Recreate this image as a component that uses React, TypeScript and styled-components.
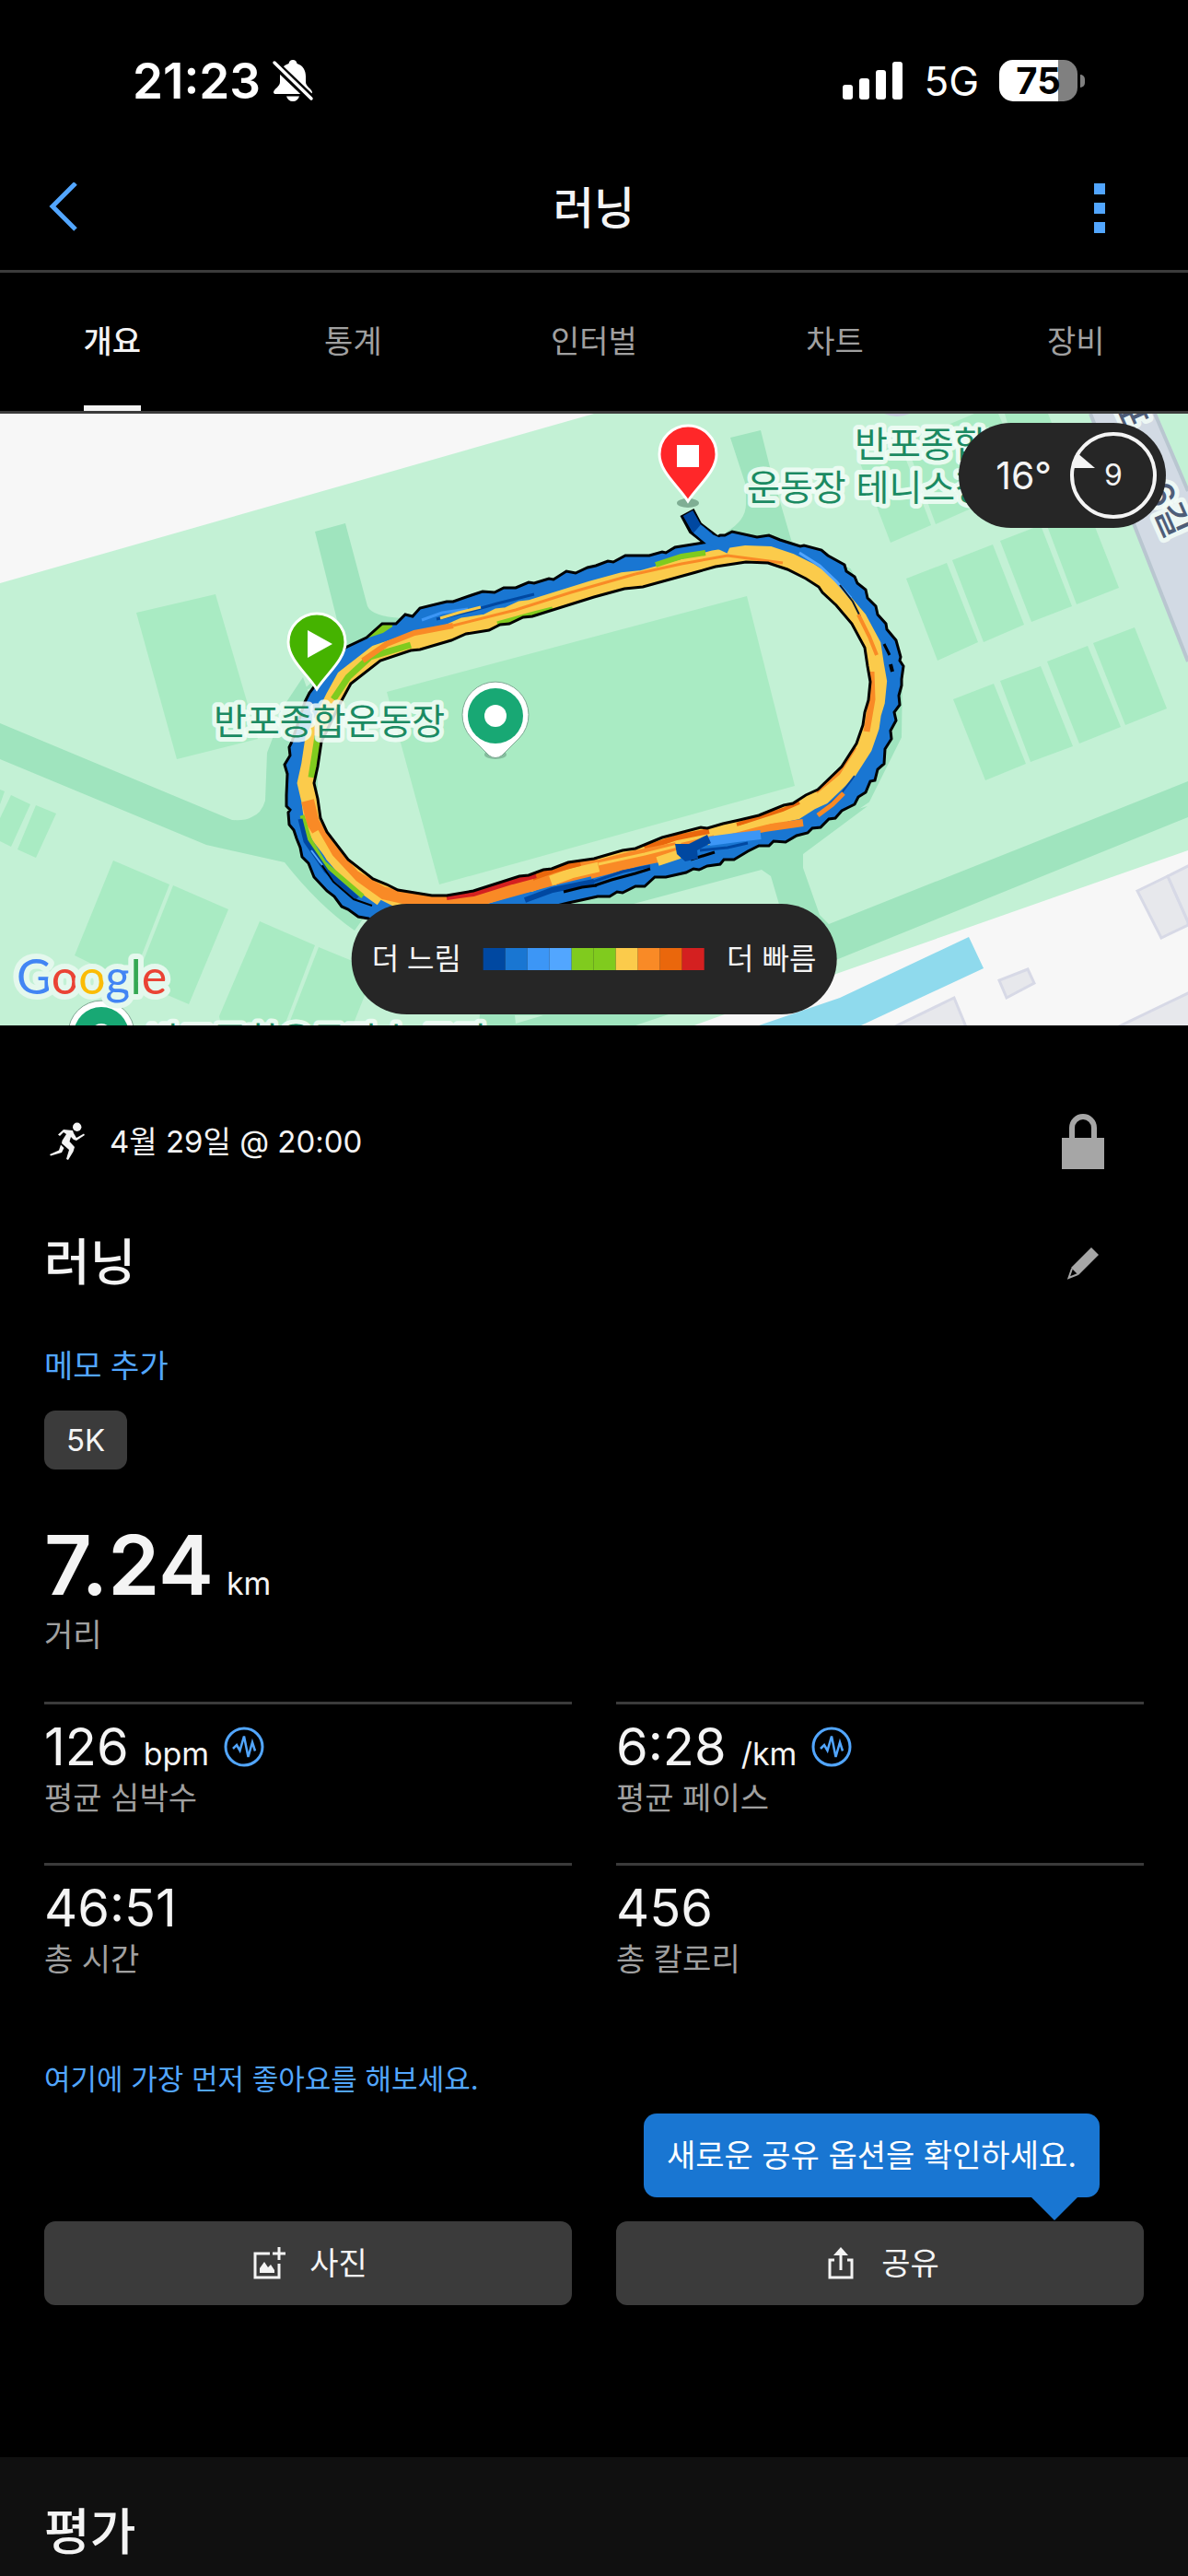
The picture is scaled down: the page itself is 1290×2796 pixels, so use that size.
import { useState } from "react";
import styled, { createGlobalStyle } from "styled-components";

const color = {
  black: "#000",
  section: "#101010",
  surface: "#3b3b3b",
  overlay: "#262626",
  white: "#f4f4f4",
  gray: "#a0a0a0",
  icon: "#a6a6a6",
  blue: "#52a6ff",
  tooltip: "#1976d2",
};

const paceColors = [
  "#0048a1",
  "#1976d2",
  "#3c96f6",
  "#52a6ff",
  "#80cb1e",
  "#80cb1e",
  "#fbcb4b",
  "#f98a26",
  "#ea670c",
  "#d42020",
];

const tabs = ["개요", "통계", "인터벌", "차트", "장비"];

const metrics = [
  { value: "126", unit: "bpm", label: "평균 심박수", hasGraph: true },
  { value: "6:28", unit: "/km", label: "평균 페이스", hasGraph: true },
  { value: "46:51", unit: "", label: "총 시간", hasGraph: false },
  { value: "456", unit: "", label: "총 칼로리", hasGraph: false },
];

// 트랙 바깥쪽 / 안쪽 경계
const outerLine =
  "331,313 336,303 352,282 375,254 398,243 415,228 430,228 440,218 448,220 456,211 485,204 492,204 512,197 524,193 537,194 547,189 560,189 574,183 580,184 596,179 601,180 615,171 625,173 638,167 647,165 660,160 666,161 679,154 705,154 719,150 723,151 733,145 770,139 782,132 787,132 795,128 822,134 835,132 847,137 869,144 873,143 892,148 899,154 917,164 919,171 928,177 931,184 940,191 942,200 951,209 953,218 962,228 963,234 973,246 978,264 977,268 981,274 979,288 979,295 976,306 977,316 971,324 973,333 967,344 968,353 961,364 960,380 953,386 950,398 945,399 940,411 932,416 928,424 914,431 907,439 900,440 891,449 882,450 877,455 865,458 853,465 840,464 835,469 824,469 812,475 797,484 786,484 782,489 768,491 759,495 753,494 745,498 723,503 711,503 700,513 690,513 676,520 670,519 662,524 649,524 631,528 617,531 560,545 500,552 440,556 410,552 400,548 389,546 378,538 371,535 363,524 355,518 341,503 335,488 328,481 326,471 322,461 319,452 314,446 313,433 315,430 311,426 311,414 312,391 309,381 315,371 314,362 317,356";
const innerLine =
  "370,313 381,293 413,268 446,257 456,256 490,246 506,239 531,235 543,229 553,228 568,221 578,220 645,199 678,190 698,188 756,172 777,166 810,161 834,162 855,169 875,179 889,188 893,194 908,208 925,228 939,254 942,274 945,291 943,311 939,324 937,338 930,358 914,383 888,408 875,414 861,423 851,425 824,436 803,441 785,445 768,450 761,449 719,460 690,472 676,474 645,483 617,487 599,494 590,495 574,501 564,502 514,518 485,523 469,523 432,517 420,511 405,505 378,484 355,454 348,439 345,418 341,401 345,383 349,356";
const ring = `M${outerLine.split(" ").join("L")}ZM${innerLine
  .split(" ")
  .join("L")}Z`;

const streaks = [
  // 왼쪽 위 코너
  { points: "398,246 412,236 426,230", color: paceColors[4], width: 9 },
  { points: "362,310 378,286 402,264 446,251", color: paceColors[4], width: 7 },
  { points: "394,268 420,250 450,238 492,230", color: paceColors[7], width: 6 },
  { points: "385,256 400,248 418,242 430,234", color: paceColors[1], width: 9 },
  // 직선 구간 위쪽
  { points: "458,224 480,216 508,212", color: paceColors[2], width: 3 },
  { points: "474,223 512,214 540,206 580,196", color: paceColors[0], width: 3 },
  { points: "478,222 498,216 522,210", color: paceColors[6], width: 3 },
  { points: "492,230 560,213 620,194 690,174", color: paceColors[7], width: 3 },
  { points: "540,228 580,217 600,212", color: paceColors[4], width: 5 },
  { points: "712,164 740,155 766,151", color: paceColors[4], width: 6 },
  { points: "690,174 740,163 790,154 850,162", color: paceColors[7], width: 3 },
  // 오른쪽 코너
  { points: "868,151 890,165 908,182 924,200", color: paceColors[3], width: 3 },
  { points: "912,186 926,204 934,220", color: "#0b1c30", width: 2 },
  { points: "932,218 944,242 952,262", color: paceColors[7], width: 4 },
  { points: "960,250 966,262", color: "#000", width: 3 },
  { points: "967,272 969,280", color: "#000", width: 4 },
  { points: "946,280 947,310 941,345", color: paceColors[7], width: 7 },
  { points: "928,362 910,390 886,410", color: paceColors[7], width: 5 },
  { points: "928,393 912,414 892,432", color: paceColors[0], width: 2 },
  { points: "916,412 904,424 888,436", color: paceColors[7], width: 5 },
  // 직선 구간 아래쪽
  { points: "872,444 830,450 790,458 740,470", color: paceColors[7], width: 8 },
  { points: "868,422 850,430 800,446", color: paceColors[8], width: 4 },
  { points: "770,453 735,460 700,472", color: paceColors[8], width: 6 },
  { points: "860,436 820,446 775,458", color: paceColors[6], width: 6 },
  { points: "735,474 690,483 640,496", color: paceColors[7], width: 18 },
  { points: "738,478 714,486", color: paceColors[6], width: 10 },
  { points: "740,468 700,478 645,490", color: paceColors[6], width: 3 },
  { points: "770,464 800,460 826,457", color: paceColors[2], width: 10 },
  { points: "760,474 790,471 812,466", color: paceColors[0], width: 3 },
  { points: "750,484 776,476", color: "#000", width: 3 },
  { points: "644,508 676,497 706,491", color: paceColors[0], width: 3 },
  { points: "646,512 664,506 690,499 706,494", color: "#000", width: 3 },
  { points: "570,528 600,517 645,508", color: paceColors[0], width: 6 },
  { points: "612,519 632,514 648,512", color: "#000", width: 3 },
  { points: "650,490 600,502 560,513 510,527 450,530", color: paceColors[7], width: 20 },
  { points: "598,507 620,499 650,492", color: paceColors[6], width: 11 },
  { points: "630,487 600,495 578,503", color: paceColors[8], width: 8 },
  { points: "582,501 556,508 514,521 485,525", color: paceColors[9], width: 6 },
  // 왼쪽 아래 코너
  { points: "334,420 340,444 358,472 384,502 415,520 460,530", color: paceColors[7], width: 14 },
  { points: "342,454 358,482 384,510 412,530", color: paceColors[6], width: 8 },
  { points: "328,436 336,462 352,488 394,524", color: paceColors[4], width: 5 },
  { points: "326,440 332,464 354,496 388,526", color: paceColors[0], width: 5 },
  { points: "348,488 362,508 384,527 404,534", color: "#000", width: 2 },
  { points: "338,474 350,490", color: paceColors[3], width: 2 },
  { points: "346,350 343,370 339,395", color: paceColors[4], width: 9 },
];

const courts = [
  "148,216 234,196 280,353 192,375",
  "420,302 811,198 863,404 477,511",
  "0,408 5,410 0,424",
  "12,414 33,424 12,470 0,464 0,439",
  "39,425 61,434 39,482 19,473",
  "123,485 184,511 142,618 81,588",
  "188,512 248,538 205,641 147,616",
  "282,551 342,577 309,664 240,664 238,654",
  "346,579 407,604 383,664 313,664",
  "933,51 977,32 1011,121 967,140",
  "983,30 1027,12 1061,100 1016,120",
  "1020,16 1058,0 1084,0 1090,14",
  "1091,0 1138,0 1150,30 1100,30",
  "984,179 1028,162 1062,248 1018,268",
  "1034,159 1078,142 1112,229 1068,248",
  "1086,138 1130,121 1164,209 1120,226",
  "1136,119 1180,100 1215,189 1169,207",
  "1035,310 1079,293 1114,380 1070,398",
  "1086,290 1130,274 1165,361 1119,378",
  "1137,269 1181,252 1217,340 1172,358",
  "1187,249 1232,232 1267,320 1222,338",
];

const buildings = [
  "1116,603 1123,618 1093,634 1085,615",
  "1235,518 1268,502 1290,552 1290,555 1261,569",
  "1268,502 1292,490 1292,556",
  "1036,634 1050,668 966,668",
  "1292,628 1213,666 1292,666",
];

const pinPath =
  "M0 0C-10 -16 -31 -32 -31 -51A31 31 0 0 1 31 -51C31 -32 10 -16 0 0Z";

const Poi = ({ x, y }: { x: number; y: number }) => (
  <g transform={`translate(${x} ${y})`}>
    <ellipse cx="0" cy="42" rx="12" ry="5" fill="#5f8f77" opacity="0.5" />
    <path
      d="M-7 43L-26 24A36 36 0 1 1 26 24L7 43Q0 48 -7 43Z"
      fill="#fff"
      stroke="#7ea893"
      strokeWidth="1"
    />
    <circle r="30" fill="#18a874" />
    <circle r="12" fill="#fff" />
  </g>
);

const MapCanvas = () => (
  <MapSvg viewBox="0 0 1290 664" preserveAspectRatio="xMidYMid slice">
    <defs>
      <clipPath id="ring">
        <path d={ring} clipRule="evenodd" />
      </clipPath>
    </defs>
    <rect width="1290" height="664" fill="#f7f7f7" />
    <path d="M0 184L645 0H1290V474L908 608L754 664H0Z" fill="#c3f1d5" />

    {/* 산책로 */}
    <g fill="#9fe4be">
      <path d="M342 128L375 119L399 209Q404 220 436 222L380 290L329 300Q366 270 366 224Z" />
      <path d="M793 26L826 18L836 58L860 140L780 150L789 128Q810 116 810 98V78Z" />
      <path d="M0 336L252 441Q266 442 273 438Q284 434 288 420L290 368L311 313L329 286L345 330V440L400 540L385 561Q346 534 309 487L224 468L0 375Z" />
      <path d="M872 478V493L890 544L900 554L1290 399V438L910 592L723 653L690 664H520L522 640L860 580L837 502L827 495L688 532L600 560L640 510L860 450L942 426Z" />
      <path d="M559 653H590L560 662Z" fill="#c3f1d5" />
    </g>
    <polyline
      points="850,140 920,172 975,280 974,350 940,418 870,466"
      fill="none"
      stroke="#9fe4be"
      strokeWidth="10"
    />
    {courts.map((points) => (
      <polygon key={points} points={points} fill="#a9ebc3" />
    ))}

    {/* 도로, 물, 건물 */}
    <path d="M1184 0H1254L1290 84V269Z" fill="#d2dae4" />
    <path d="M1184 0L1290 269M1254 0L1290 84" stroke="#b9c6d0" strokeWidth="4" />
    <path d="M1052 568L1068 602L935 664H824L912 634Z" fill="#8fdaed" />
    {buildings.map((points) => (
      <polygon
        key={points}
        points={points}
        fill="#e7e8ec"
        stroke="#d7d9e6"
        strokeWidth="3"
      />
    ))}
    <path d="M960 0H988Q974 6 960 0Z" fill="#c9cfe0" />

    {/* 달린 경로 */}
    <polyline
      points="746,107 755,124 768,134 784,146"
      fill="none"
      stroke="#000"
      strokeWidth="17"
    />
    <path d={ring} fill="#1976d2" fillRule="evenodd" />
    <g clipPath="url(#ring)" fill="none">
      <polygon points={innerLine} stroke="#fbcb4b" strokeWidth="36" />
      {streaks.map((streak) => (
        <polyline
          key={streak.points}
          points={streak.points}
          stroke={streak.color}
          strokeWidth={streak.width}
        />
      ))}
      <polygon
        points="733,467 748,467 768,457 772,466 757,474 758,483 744,486 735,478"
        fill="#0048a1"
      />
    </g>
    <path d={ring} fill="none" stroke="#000" strokeWidth="3" />
    <polyline
      points="747,108 756,124 770,135"
      fill="none"
      stroke="#0048a1"
      strokeWidth="12"
    />
    <polyline
      points="757,125 770,136 792,146"
      fill="none"
      stroke="#1976d2"
      strokeWidth="12"
    />

    <MapLabel x="232" y="348">
      반포종합운동장
    </MapLabel>
    <MapLabel x="928" y="47">
      반포종합
    </MapLabel>
    <MapLabel x="811" y="94">
      운동장 테니스장
    </MapLabel>
    <MapLabel x="160" y="694">
      반포종합운동장 농구장
    </MapLabel>
    <RoadLabel transform="translate(1208 -12) rotate(66)">포</RoadLabel>
    <RoadLabel transform="translate(1243 82) rotate(66)">6길</RoadLabel>

    <Poi x={538} y={328} />
    <Poi x={110} y={674} />

    <g transform="translate(344 299)">
      <path d={pinPath} fill="#45b300" stroke="#fff" strokeWidth="3" />
      <path d="M-10 -64L17 -49L-10 -34Z" fill="#fff" />
    </g>
    <ellipse cx="747" cy="97" rx="12" ry="5" fill="#7fae94" />
    <g transform="translate(747 95)">
      <path d={pinPath} fill="#ff2729" stroke="#fff" strokeWidth="3" />
      <rect x="-12" y="-61" width="24" height="24" fill="#fff" />
    </g>

    <Logo x="18" y="630">
      <tspan fill="#4285f4">G</tspan>
      <tspan fill="#ea4335">o</tspan>
      <tspan fill="#fbbc05">o</tspan>
      <tspan fill="#4285f4">g</tspan>
      <tspan fill="#34a853">l</tspan>
      <tspan fill="#ea4335">e</tspan>
    </Logo>
  </MapSvg>
);

const MutedBell = () => (
  <svg width="46" height="46" viewBox="0 0 46 46" fill="#fff">
    <path d="M23 0C20.500 0 19 1.600 18.500 4C12 6 9 11.500 9 18V24C9 29 3 31 2 35C2 36.500 3 37 4.500 37H41.500C43 37 44 36.500 44 35C43 31 37 29 37 24V18C37 11.500 34 6 27.500 4C27 1.600 25.500 0 23 0Z" />
    <path d="M16 39.500H30C29 43 26.500 45 23 45S17 43 16 39.500Z" />
    <path d="M1 2L44 43" stroke="#000" strokeWidth="9" />
    <path d="M3 3L43 42" stroke="#fff" strokeWidth="3.500" strokeLinecap="round" />
  </svg>
);

const Signal = () => (
  <svg width="66" height="42" viewBox="0 0 66 42" fill="#fff">
    <rect x="0" y="25" width="11" height="16" rx="3" />
    <rect x="18" y="18" width="11" height="23" rx="3" />
    <rect x="36" y="9" width="11" height="32" rx="3" />
    <rect x="54" y="0" width="11" height="41" rx="3" />
  </svg>
);

const GraphIcon = () => (
  <svg
    width="44"
    height="44"
    viewBox="0 0 44 44"
    fill="none"
    stroke={color.blue}
    strokeWidth="3"
  >
    <circle cx="22" cy="22" r="20" />
    <path d="M10 24L14 20L17.500 26L22 10.500L26.500 33L31 17L34 26.500" strokeWidth="2.500" />
  </svg>
);

const RunnerIcon = () => (
  <svg width="40" height="42" viewBox="0 0 40 42" fill={color.white}>
    <circle cx="30.700" cy="5.300" r="4.700" />
    <path d="M16 8L26 9L27 12L30 17L38 12.500L39 14L30 20L27 19L24 16L22.500 21L28 27L26.500 32L21 41L19 40L22 30L14 23L14.500 20L19 13L16 11L12 15L10 13.500Z" />
    <path d="M13 24.500L16.500 28L14 33L2 36.500L1 35L11 30.500Z" />
  </svg>
);

const App = () => {
  const [selectedTab, setSelectedTab] = useState("개요");

  return (
    <Page>
      <GlobalStyle />
      <StatusBar>
        <StatusGroup>
          <Time>21:23</Time>
          <MutedBell />
        </StatusGroup>
        <StatusGroup $wide>
          <Signal />
          <Network>5G</Network>
          <Battery>
            <BatteryLevel>75</BatteryLevel>
            <BatteryTip />
          </Battery>
        </StatusGroup>
      </StatusBar>

      <Header>
        <IconButton aria-label="뒤로">
          <svg width="36" height="56" viewBox="0 0 36 56" fill="none">
            <path d="M34 1L9 26L34 51" stroke={color.blue} strokeWidth="5" />
          </svg>
        </IconButton>
        <HeaderTitle>러닝</HeaderTitle>
        <IconButton aria-label="더보기">
          <svg width="12" height="54" viewBox="0 0 12 54" fill={color.blue}>
            <rect width="12" height="12" />
            <rect y="21" width="12" height="12" />
            <rect y="42" width="12" height="12" />
          </svg>
        </IconButton>
      </Header>

      <TabBar>
        <TabList>
          {tabs.map((tab) => (
            <TabCell key={tab}>
              <TabBtn
                $isSelected={selectedTab === tab}
                onClick={() => setSelectedTab(tab)}
              >
                {tab}
              </TabBtn>
            </TabCell>
          ))}
        </TabList>
      </TabBar>

      <MapArea>
        <MapCanvas />
        <Weather>
          <span>16°</span>
          <Compass>
            9
            <svg viewBox="0 0 94 94" fill="none">
              <circle cx="47" cy="47" r="45" stroke={color.white} strokeWidth="4" />
              <path d="M7 22L27 39H2Z" fill={color.white} />
            </svg>
          </Compass>
        </Weather>
        <Legend>
          <span>더 느림</span>
          <Scale>
            {paceColors.map((pace, i) => (
              <ScaleStep key={i} $color={pace} />
            ))}
          </Scale>
          <span>더 빠름</span>
        </Legend>
      </MapArea>

      <Details>
        <Row>
          <Started>
            <RunnerIcon />
            <span>4월 29일 @ 20:00</span>
          </Started>
          <IconButton aria-label="공개 범위">
            <svg width="48" height="60" viewBox="0 0 48 60">
              <path d="M1 26H47V60H1Z" fill={color.icon} />
              <path
                d="M12 28V15A12 12 0 0 1 36 15V28"
                fill="none"
                stroke={color.icon}
                strokeWidth="6"
              />
            </svg>
          </IconButton>
        </Row>
        <TitleRow>
          <Title>러닝</Title>
          <IconButton aria-label="이름 수정">
            <svg width="48" height="36" viewBox="0 0 48 36" fill={color.icon}>
              <path d="M33 1L41 9L19 31L11 23Z" />
              <path
                d="M12 24L8.500 34L18.500 30"
                fill="none"
                stroke={color.icon}
                strokeWidth="2"
              />
            </svg>
          </IconButton>
        </TitleRow>
        <MemoLink href="#memo">메모 추가</MemoLink>
        <Chip>5K</Chip>

        <Distance>
          <Value $size={90} $weight={600}>
            7.24
          </Value>
          <Unit>km</Unit>
        </Distance>
        <Label>거리</Label>

        <Metrics>
          {metrics.map(({ value, unit, label, hasGraph }) => (
            <Metric key={label}>
              <MetricValue>
                <Value $size={56} $weight={400}>
                  {value}
                </Value>
                {unit && <Unit>{unit}</Unit>}
                {hasGraph && <GraphIcon />}
              </MetricValue>
              <Label>{label}</Label>
            </Metric>
          ))}
        </Metrics>

        <LikeLink href="#like">여기에 가장 먼저 좋아요를 해보세요.</LikeLink>

        <Actions>
          <ActionBtn>
            <svg width="36" height="36" viewBox="0 0 36 36" fill="none">
              <path
                d="M19 7H3V33H29V18"
                stroke={color.white}
                strokeWidth="3"
              />
              <path d="M29 0V14M22 7H36" stroke={color.white} strokeWidth="3" />
              <path d="M8 28V23L13 16L17 22L20 19L24 25V28Z" fill={color.white} />
            </svg>
            사진
          </ActionBtn>
          <ActionBtn>
            <svg width="36" height="36" viewBox="0 0 36 36" fill="none">
              <path
                d="M11 14H6V33H30V14H25M18 25V5"
                stroke={color.white}
                strokeWidth="3"
              />
              <path d="M18 0L26 9H10Z" fill={color.white} />
            </svg>
            공유
          </ActionBtn>
          <Tooltip>새로운 공유 옵션을 확인하세요.</Tooltip>
        </Actions>
      </Details>

      <Review>
        <Title>평가</Title>
      </Review>
    </Page>
  );
};

const GlobalStyle = createGlobalStyle`
  * {
    box-sizing: border-box;
  }
  body {
    margin: 0;
    background: ${color.black};
    color: ${color.white};
    font-family: Inter, "Noto Sans CJK KR", sans-serif;
    font-size: 34px;
    line-height: 48px;
  }
  button {
    border: 0;
    padding: 0;
    background: none;
    color: inherit;
    font: inherit;
  }
  a {
    text-decoration: none;
  }
  svg {
    display: block;
    flex-shrink: 0;
  }
`;

const Page = styled.main`
  display: flex;
  flex-direction: column;
  min-height: 100vh;
`;

const StatusBar = styled.div`
  display: flex;
  align-items: center;
  justify-content: space-between;
  height: 159px;
  padding: 16px 112px 0 144px;
`;

const StatusGroup = styled.div<{ $wide?: boolean }>`
  display: flex;
  align-items: center;
  gap: ${({ $wide }) => ($wide ? "22px" : "12px")};
  color: #fff;
`;

const Time = styled.span`
  font-size: 53px;
  font-weight: 600;
`;

const Network = styled.span`
  font-size: 44px;
`;

const Battery = styled.div`
  display: flex;
  align-items: center;
  gap: 3px;
`;

const BatteryLevel = styled.div`
  width: 85px;
  height: 45px;
  border-radius: 15px;
  background: linear-gradient(90deg, #fff 75%, #808080 75%);
  color: #000;
  font-size: 40px;
  font-weight: 700;
  line-height: 45px;
  text-align: center;
`;

const BatteryTip = styled.div`
  width: 5px;
  height: 14px;
  border-radius: 0 8px 8px 0;
  background: #808080;
`;

const Header = styled.header`
  display: flex;
  align-items: center;
  justify-content: space-between;
  height: 137px;
  padding: 0 90px 0 48px;
  border-bottom: 3px solid ${color.surface};
`;

const HeaderTitle = styled.h1`
  flex: 1;
  margin: 0 0 0 18px;
  font-size: 48px;
  font-weight: 500;
  text-align: center;
`;

const IconButton = styled.button`
  display: flex;
  align-items: center;
`;

const TabBar = styled.nav`
  overflow: hidden;
  border-bottom: 3px solid ${color.surface};
`;

const TabList = styled.div`
  display: flex;
  margin: 0 -9px;
`;

const TabCell = styled.div`
  display: flex;
  flex: 1;
  justify-content: center;
`;

const TabBtn = styled.button<{ $isSelected: boolean }>`
  height: 150px;
  padding-top: 6px;
  border-bottom: 6px solid
    ${({ $isSelected }) => ($isSelected ? color.white : "transparent")};
  color: ${({ $isSelected }) => ($isSelected ? color.white : color.gray)};
  font-weight: ${({ $isSelected }) => ($isSelected ? 500 : 400)};
`;

const MapArea = styled.section`
  position: relative;
  height: 664px;
`;

const MapSvg = styled.svg`
  width: 100%;
  height: 100%;
`;

const MapLabel = styled.text`
  fill: #1b8a62;
  stroke: rgba(243, 253, 248, 0.85);
  stroke-width: 10px;
  stroke-linejoin: round;
  paint-order: stroke;
  font-size: 39px;
`;

const RoadLabel = styled(MapLabel)`
  fill: #4e5d78;
  font-weight: 500;
`;

const Logo = styled.text`
  stroke: #e4f8ed;
  stroke-width: 12px;
  stroke-linejoin: round;
  paint-order: stroke;
  font-family: Lato, sans-serif;
  font-size: 52px;
`;

const Weather = styled.div`
  position: absolute;
  top: 10px;
  right: 24px;
  display: flex;
  align-items: center;
  gap: 20px;
  height: 114px;
  padding: 0 10px 0 40px;
  border-radius: 57px;
  background: ${color.overlay};
  font-size: 41px;
`;

const Compass = styled.div`
  position: relative;
  width: 94px;
  height: 94px;
  font-size: 32px;
  line-height: 94px;
  text-align: center;
  svg {
    position: absolute;
    inset: 0;
  }
`;

const Legend = styled.div`
  position: absolute;
  bottom: 12px;
  left: 50%;
  display: flex;
  align-items: center;
  gap: 24px;
  height: 120px;
  padding: 0 22px;
  border-radius: 60px;
  background: ${color.overlay};
  font-size: 32px;
  white-space: nowrap;
  transform: translateX(-50%);
`;

const Scale = styled.div`
  display: flex;
`;

const ScaleStep = styled.div<{ $color: string }>`
  width: 24px;
  height: 24px;
  background: ${({ $color }) => $color};
`;

const Details = styled.section`
  display: flex;
  flex-direction: column;
  padding: 96px 48px 165px;
`;

const Row = styled.div`
  display: flex;
  align-items: center;
  justify-content: space-between;
  height: 60px;
  padding-right: 42px;
`;

const Started = styled.div`
  display: flex;
  align-items: center;
  gap: 26px;
  padding-left: 5px;
  font-size: 33px;
`;

const TitleRow = styled(Row)`
  margin-top: 72px;
`;

const Title = styled.h2`
  margin: 0;
  font-size: 54px;
  font-weight: 500;
  line-height: 60px;
`;

const MemoLink = styled.a`
  align-self: flex-start;
  margin-top: 58px;
  color: ${color.blue};
`;

const Chip = styled.span`
  align-self: flex-start;
  margin-top: 24px;
  padding: 0 24px;
  border-radius: 12px;
  background: ${color.surface};
  font-size: 33px;
  line-height: 64px;
`;

const Distance = styled.div`
  display: flex;
  align-items: baseline;
  gap: 14px;
  height: 100px;
  margin-top: 56px;
`;

const Value = styled.span<{ $size: number; $weight: number }>`
  font-size: ${({ $size }) => $size}px;
  font-weight: ${({ $weight }) => $weight};
  line-height: 96px;
`;

const Unit = styled.span`
  font-size: 34px;
`;

const Label = styled.div`
  color: ${color.gray};
`;

const Metrics = styled.div`
  display: grid;
  grid-template-columns: 1fr 1fr;
  column-gap: 48px;
  margin-top: 48px;
`;

const Metric = styled.div`
  height: 175px;
  border-top: 3px solid ${color.surface};
`;

const MetricValue = styled.div`
  display: flex;
  align-items: baseline;
  gap: 16px;
  height: 78px;
  ${Value} {
    line-height: 92px;
  }
  svg {
    align-self: center;
    margin-top: 14px;
  }
`;

const LikeLink = styled.a`
  align-self: flex-start;
  margin-top: 36px;
  color: ${color.blue};
  font-size: 31px;
`;

const Actions = styled.div`
  position: relative;
  display: grid;
  grid-template-columns: 1fr 1fr;
  gap: 48px;
  margin-top: 130px;
`;

const ActionBtn = styled.button`
  display: flex;
  align-items: center;
  justify-content: center;
  gap: 26px;
  height: 91px;
  padding-left: 4px;
  border-radius: 12px;
  background: ${color.surface};
`;

const Tooltip = styled.div`
  position: absolute;
  right: 48px;
  bottom: 117px;
  padding: 0 25px;
  border-radius: 14px;
  background: ${color.tooltip};
  color: #fff;
  line-height: 91px;
  white-space: nowrap;
  &::after {
    content: "";
    position: absolute;
    top: 100%;
    right: 24px;
    border: 25px solid transparent;
    border-top-color: ${color.tooltip};
    border-bottom: 0;
  }
`;

const Review = styled.section`
  flex: 1;
  padding: 52px 48px 17px;
  background: ${color.section};
`;

export default App;
